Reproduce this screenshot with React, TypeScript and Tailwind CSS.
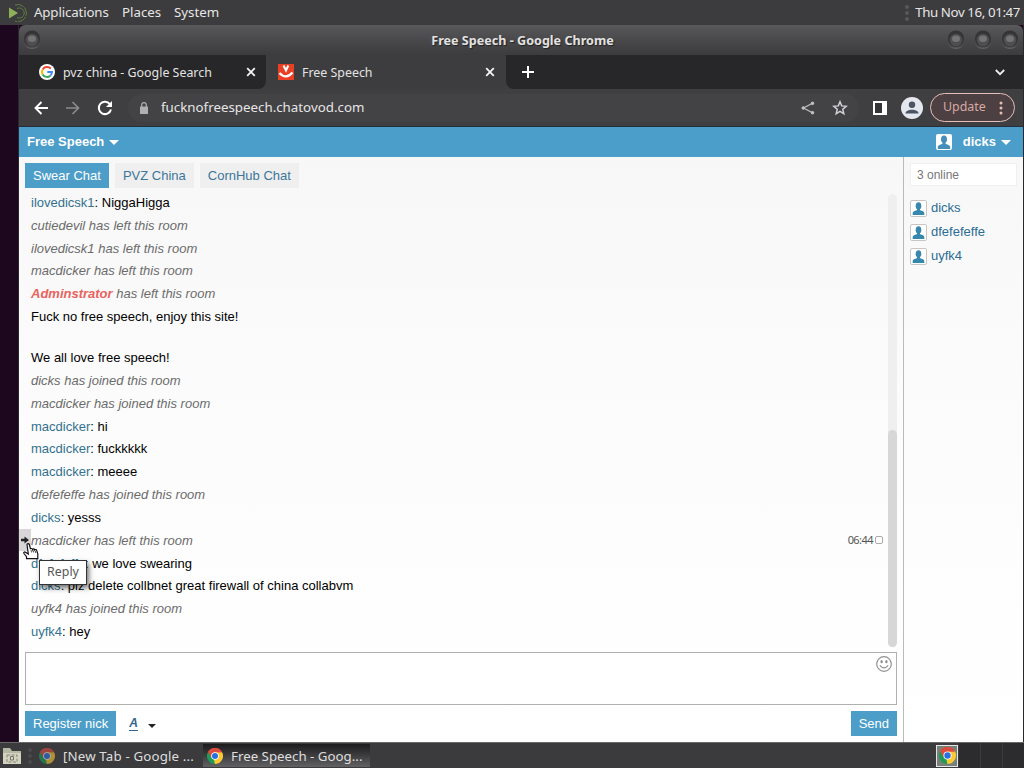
import type { ReactNode } from "react";

type Message = {
  nick?: string;
  text: string;
  system?: boolean;
  admin?: boolean;
  time?: string;
  gapAfter?: boolean;
};

const messages: Message[] = [
  { nick: "ilovedicsk1", text: "NiggaHigga" },
  { nick: "cutiedevil", text: "has left this room", system: true },
  { nick: "ilovedicsk1", text: "has left this room", system: true },
  { nick: "macdicker", text: "has left this room", system: true },
  { nick: "Adminstrator", text: "has left this room", system: true, admin: true },
  { text: "Fuck no free speech, enjoy this site!", gapAfter: true },
  { text: "We all love free speech!" },
  { nick: "dicks", text: "has joined this room", system: true },
  { nick: "macdicker", text: "has joined this room", system: true },
  { nick: "macdicker", text: "hi" },
  { nick: "macdicker", text: "fuckkkkk" },
  { nick: "macdicker", text: "meeee" },
  { nick: "dfefefeffe", text: "has joined this room", system: true },
  { nick: "dicks", text: "yesss" },
  { nick: "macdicker", text: "has left this room", system: true, time: "06:44" },
  { nick: "dfefefeffe", text: "we love swearing" },
  { nick: "dicks", text: "plz delete collbnet great firewall of china collabvm" },
  { nick: "uyfk4", text: "has joined this room", system: true },
  { nick: "uyfk4", text: "hey" },
];

const online = ["dicks", "dfefefeffe", "uyfk4"];

function ChromeLogo({ className }: { className: string }) {
  return (
    <svg viewBox="0 0 16 16" className={className}>
      <path d="M8 8L1.07 4A8 8 0 0 1 14.93 4Z" fill="#dd4b3e" />
      <path d="M8 8L14.93 4A8 8 0 0 1 8 16Z" fill="#fcc934" />
      <path d="M8 8L8 16A8 8 0 0 1 1.07 4Z" fill="#1e9b57" />
      <path d="M8 4.2H15L11.4 10L8 16L7 12Z" fill="#fcc934" />
      <path d="M1.07 4A8 8 0 0 1 15 4.3H8L4.6 10Z" fill="#dd4b3e" />
      <circle cx="8" cy="8" r="3.8" fill="#fff" />
      <circle cx="8" cy="8" r="3" fill="#2a6fe0" />
    </svg>
  );
}

function UserIcon({ className, fill }: { className: string; fill: string }) {
  return (
    <svg viewBox="0 0 16 16" className={className} fill={fill}>
      <ellipse cx="8" cy="5.2" rx="3" ry="3.8" />
      <path d="M6.5 7.5h3v2.2c1 .8 4.5 1 4.7 3.3V15H1.8v-2c.2-2.3 3.7-2.500 4.7-3.3z" />
    </svg>
  );
}

function Caret({ className }: { className: string }) {
  return (
    <svg viewBox="0 0 10 5" className={className} fill="currentColor">
      <path d="M0 0h10L5 5z" />
    </svg>
  );
}

function WindowButton() {
  return (
    <svg viewBox="0 0 18 20" className="h-5 w-[18px]">
      <path d="M1 13a8 7 0 0 0 16 0l-1 3a8 5 0 0 1-14 0z" fill="#626164" />
      <circle cx="9" cy="9.5" r="8" fill="#343335" />
      <circle cx="9" cy="11" r="6.3" fill="#4e4d50" />
      <ellipse cx="9" cy="9.8" rx="4" ry="3.3" fill="#747376" />
    </svg>
  );
}

function Close() {
  return (
    <svg viewBox="0 0 10 10" className="size-[10px]" stroke="#f4f4f4" strokeWidth="1.8">
      <path d="M1.2 1.2l7.6 7.6M8.8 1.2L1.2 8.8" />
    </svg>
  );
}

function TopPanel() {
  return (
    <div className="flex h-[25px] shrink-0 items-center bg-[#3c3b3d] text-[13.3px] text-[#e6e6e6]">
      <svg viewBox="0 0 20 20" className="ml-[8px] size-5" fill="none">
        <path d="M7 2A8.5 8.5 0 1 1 7 18" stroke="#5f8040" strokeDasharray="9 1" />
        <path d="M9 5.5A5 5 0 1 1 9 14.5" stroke="#5f8040" />
        <path d="M1 4.5L10 10L1 15.5Z" fill="#8faf58" />
      </svg>
      <span className="ml-[6px] w-[88px] tracking-[-0.15px]">Applications</span>
      <span className="w-[52px]">Places</span>
      <span>System</span>
      <span className="ml-auto mr-[6px] h-4 border-l-4 border-dotted border-[#58575a]" />
      <span className="mr-[4px] tracking-[-0.4px] whitespace-nowrap">Thu Nov 16, 01:47</span>
    </div>
  );
}

function TitleBar() {
  return (
    <div className="flex h-[30px] shrink-0 items-center rounded-t-md bg-linear-to-b from-[#59585b] via-[#49484b] to-[#3c3b3d] pb-[2px]">
      <div className="flex w-20 pl-[4px]">
        <WindowButton />
      </div>
      <div className="flex-1 pt-[5px] pl-[3px] text-center text-[12.6px] font-bold text-[#e2e2e2] [text-shadow:1px_1px_1px_#222]">
        Free Speech - Google Chrome
      </div>
      <div className="flex w-20 justify-end gap-[9px] pr-[4px]">
        <WindowButton />
        <WindowButton />
        <WindowButton />
      </div>
    </div>
  );
}

function TabStrip() {
  return (
    <div className="flex h-[34px] shrink-0 bg-[#3d3c3f] text-[12.4px] text-[#e3e3e3]">
      <div className="flex w-[247px] items-center rounded-br-lg bg-[#272628] pr-[10px] pl-[20px]">
        <svg viewBox="0 0 16 16" className="size-4" fill="none" strokeWidth="1.9">
          <circle cx="8" cy="8" r="8" fill="#fff" />
          <path d="M11.8 4.7A5 5 0 0 0 3.7 5.4" stroke="#ea4335" />
          <path d="M3.7 5.4A5 5 0 0 0 3.7 10.6" stroke="#fbbc05" />
          <path d="M3.7 10.6A5 5 0 0 0 11.3 11.7" stroke="#34a853" />
          <path d="M11.3 11.7A5 5 0 0 0 13 8H8.3" stroke="#4285f4" />
        </svg>
        <span className="ml-[8px] flex-1 pt-[2px]">pvz china - Google Search</span>
        <Close />
      </div>
      <div className="flex w-[240px] items-center pr-[11px] pl-[12px]">
        <svg viewBox="0 0 16 16" className="size-4" fill="none" stroke="#fff">
          <path d="M0 0h16v16H0z" fill="#e83f25" stroke="none" />
          <path d="M5.500 1.5L8 6.500L10.300 1.5" strokeWidth="2" />
          <path d="M1.5 9Q8 16 14.5 8.500" strokeWidth="2.3" />
        </svg>
        <span className="ml-[8px] flex-1 pt-[2px]">Free Speech</span>
        <Close />
      </div>
      <div className="flex flex-1 items-center justify-between rounded-bl-lg bg-[#272628] pr-[18px] pl-[16px]">
        <svg viewBox="0 0 12 12" className="size-3" stroke="#fff" strokeWidth="2">
          <path d="M6 0v12M0 6h12" />
        </svg>
        <svg viewBox="0 0 10 7" className="h-[7px] w-[10px]" fill="none" stroke="#eee" strokeWidth="1.8">
          <path d="M.8 1L5 5.2L9.2 1" />
        </svg>
      </div>
    </div>
  );
}

function Toolbar() {
  return (
    <div className="flex h-[38px] shrink-0 items-center border-b border-[#242f3b] bg-[#3f3e41] pl-[15px] text-[13px]">
      <svg viewBox="0 0 14 14" className="size-[14px]" fill="none" stroke="#fff" strokeWidth="1.9">
        <path d="M14 7H1.5M7.5 1L1.5 7l6 6" />
      </svg>
      <svg viewBox="0 0 14 14" className="ml-[18px] size-[14px]" fill="none" stroke="#8b8a8d" strokeWidth="1.7">
        <path d="M0 7h12.5M6.5 1l6 6l-6 6" />
      </svg>
      <svg viewBox="0 0 16 16" className="ml-[17px] size-4" fill="none" stroke="#fff" strokeWidth="2">
        <path d="M13.2 4.5A6.2 6.2 0 1 0 14 9.5" />
        <path d="M15 1v6H9z" fill="#fff" stroke="none" />
      </svg>
      <div className="ml-[15px] flex h-7 w-[731px] items-center rounded-full bg-[#434245] pr-[11px] pl-[12px]">
        <svg viewBox="0 0 8 12" className="h-3 w-2" fill="#b0afb2">
          <path d="M0 4.5h8V12H0z" />
          <path d="M1.7 5V3a2.3 2.3 0 0 1 4.6 0v2" fill="none" stroke="#b0afb2" strokeWidth="1.2" />
        </svg>
        <span className="ml-[13px] flex-1 text-[13.3px] tracking-[0.01px] text-[#e6e6e6]">fucknofreespeech.chatovod.com</span>
        <svg viewBox="0 0 14 14" className="size-[14px]" fill="#c2c1c4" stroke="#c2c1c4">
          <path d="M11.5 2.3L2.5 7l9 4.7" fill="none" strokeWidth="1.2" />
          <circle cx="11.5" cy="2.3" r="1.3" />
          <circle cx="2.3" cy="7" r="1.3" />
          <circle cx="11.5" cy="11.7" r="1.3" />
        </svg>
        <svg viewBox="0 0 16 16" className="ml-[17px] size-4" fill="none" stroke="#d2d1d4" strokeWidth="1.5">
          <path d="M8 1.8l1.7 4.1 4.5.4-3.4 3 1 4.3L8 11.3l-3.8 2.3 1-4.3-3.4-3 4.5-.4z" />
        </svg>
      </div>
      <svg viewBox="0 0 14 14" className="ml-[14px] size-[14px]">
        <path d="M0 0h14v14H0z" fill="#fff" />
        <path d="M2 2h7v10H2z" fill="#343336" />
      </svg>
      <svg viewBox="0 0 22 22" className="ml-[14px] size-[22px]">
        <circle cx="11" cy="11" r="11" fill="#e4e8ee" />
        <circle cx="11" cy="7.7" r="3.2" fill="#4b5465" />
        <path d="M4.5 16.5c0-5 13-5 13 0z" fill="#4b5465" />
      </svg>
      <div className="ml-[7px] flex h-[29px] w-[85px] shrink-0 items-center justify-between rounded-full border border-[#e5bfba] bg-[#4c4042] pr-[11px] pl-[12px] text-[#d9a9a3]">
        <span className="text-[12.4px]">Update</span>
        <svg viewBox="0 0 4 14" className="h-[14px] w-1" fill="#eabbb4">
          <circle cx="2" cy="2" r="1.5" />
          <circle cx="2" cy="7" r="1.5" />
          <circle cx="2" cy="12" r="1.5" />
        </svg>
      </div>
    </div>
  );
}

function MessageRow({ message }: { message: Message }) {
  const { nick, text, system, admin, time, gapAfter } = message;
  return (
    <div className={gapAfter ? "h-[41.03px]" : "h-[22.83px]"}>
      <div className="relative flex h-[22.83px] items-center pl-[12px]">
        {time && <ReplyHandle />}
        {system ? (
          <p className="text-[#6b6b6b] italic">
            <span className={admin ? "font-bold text-[#e8635f]" : ""}>{nick}</span> {text}
          </p>
        ) : (
          <p className="text-black">
            {nick && <span className="text-[#33718f]">{nick}</span>}
            {nick && ": "}
            {text}
          </p>
        )}
        {time && (
          <span className="mr-[5px] ml-auto flex items-center gap-[2px] text-[#555]">
            <span className="font-['Noto_Sans',sans-serif] text-[11px] tracking-[-0.55px]">{time}</span>
            <span className="size-2 rounded-xs border border-[#aaa]" />
          </span>
        )}
      </div>
    </div>
  );
}

// reply arrow with the hand pointer and its tooltip
function ReplyHandle() {
  return (
    <>
      <span className="absolute top-0 left-0 flex h-[22px] w-[12px] items-center justify-center bg-[#d8d6d8]">
        <svg viewBox="0 0 8 8" className="size-2" fill="#222">
          <path d="M0 2.7h3.5V.5L8 4L3.5 7.5V5.3H0z" />
        </svg>
      </span>
      <span className="absolute top-[30.5px] left-[20px] z-10 flex h-[25px] w-[48px] items-center justify-center border border-[#333] bg-white font-['Noto_Sans',sans-serif] text-[12.4px] text-[#555] shadow-[2px_3px_5px_rgba(0,0,0,0.55)]">
        Reply
      </span>
      <svg viewBox="0 0 16 17" className="absolute top-[13.5px] left-[4px] z-20 h-[17px] w-4" fill="#fff" stroke="#111" strokeWidth="1.2">
        <path d="M4 1.5C4 .3 6 .3 6.3 1.5l1.2 4.7c.2-1 1.9-1 2.1.3.4-1 2-.7 2.1.5.6-.8 1.900-.4 2.100.7l1 3.5v4.500H3.500v-2L1 10.500c-.7-1 .5-2 1.500-1.200L5.300 11z" />
        <path d="M8 7l.6 2.5M10.2 7.3l.5 2.2M12.3 8l.4 2" strokeWidth=".7" />
      </svg>
    </>
  );
}

function BlueButton({ children }: { children: ReactNode }) {
  return <button className="h-[25px] bg-[#4c9dc8] px-2 text-white">{children}</button>;
}

function ChatPage() {
  return (
    <div className="flex flex-1 flex-col bg-linear-to-b from-[#f7f7f7] via-[#fcfcfc] to-white font-['Liberation_Sans',Arial,sans-serif] text-[13px]">
      <header className="flex h-[30px] shrink-0 items-center bg-[#4b9dca] pr-[12px] pl-[8px] font-bold text-white">
        <span>Free Speech</span>
        <Caret className="mt-px ml-[5px] h-[5px] w-[10px]" />
        <span className="mr-[11px] ml-auto flex size-4 rounded-xs bg-white">
          <UserIcon className="size-4" fill="#438fb9" />
        </span>
        <span>dicks</span>
        <Caret className="mt-px ml-[5px] h-[5px] w-[10px]" />
      </header>
      <div className="flex flex-1">
        <main className="flex w-[884px] flex-col">
          <nav className="flex gap-[6px] pt-[6px] pl-[6px] text-[#3c769a]">
            <span className="flex h-[25px] items-center bg-[#4c9dc8] px-2 text-white">Swear Chat</span>
            <span className="flex h-[25px] items-center bg-[#efefef] px-2">PVZ China</span>
            <span className="flex h-[25px] items-center bg-[#efefef] px-2">CornHub Chat</span>
          </nav>
          <div className="flex h-[461px] pt-[3px]">
            <div className="w-[869px] pt-[0.3px]">
              {messages.map((message, i) => (
                <MessageRow key={i} message={message} />
              ))}
            </div>
            <div className="mt-[3px] flex h-[453px] w-[9px] flex-col justify-end rounded-full bg-[#efefef]">
              <div className="h-[217px] rounded-full bg-[#d7d7d7]" />
            </div>
          </div>
          <div className="mt-[3px] ml-[6px] flex h-[53px] w-[872px] justify-end border border-[#b0b0b0] bg-white pt-[3px] pr-[4px]">
            <svg viewBox="0 0 16 16" className="size-4" fill="none" stroke="#929292" strokeWidth="1.2">
              <circle cx="8" cy="8" r="7.3" />
              <path d="M3.8 9.3q4.2 5 8.4 0" />
              <ellipse cx="5.6" cy="5.7" rx=".6" ry="1" fill="#929292" />
              <ellipse cx="10.4" cy="5.7" rx=".6" ry="1" fill="#929292" />
            </svg>
          </div>
          <div className="mt-[6px] flex items-center pr-[6px] pl-[6px]">
            <BlueButton>Register nick</BlueButton>
            <span className="ml-[13px] border-b border-[#34658c] text-[12px] leading-[13px] font-bold text-[#34658c] italic">A</span>
            <Caret className="mt-[5px] ml-[10px] h-[4px] w-2 text-[#222]" />
            <span className="ml-auto flex">
              <BlueButton>Send</BlueButton>
            </span>
          </div>
        </main>
        <aside className="flex-1 border-l border-[#bababa] pt-[6px] pl-[6px]">
          <div className="mb-[10px] flex h-[23px] w-[107px] items-center border border-[#f0f0f0] bg-white pl-[6px] text-[12px] text-[#777]">3 online</div>
          {online.map((user) => (
            <div key={user} className="flex h-6 items-center gap-[4px] text-[#2b6c94]">
              <span className="mt-px flex size-[17px] items-center justify-center rounded-xs border border-[#c7c5c5] bg-white">
                <UserIcon className="size-[15px]" fill="#3688ac" />
              </span>
              {user}
            </div>
          ))}
        </aside>
      </div>
    </div>
  );
}

function Taskbar() {
  return (
    <div className="flex h-[26px] shrink-0 items-center border-t border-[#69686b] bg-[#3b3a3c] text-[13.3px] text-[#dedede]">
      <svg viewBox="0 0 20 18" className="ml-[2px] h-[18px] w-5">
        <path d="M1 3V1h7l2 3h9v13H1z" fill="#b5b6a4" />
        <path d="M1 6h18v11H1z" fill="#d2d2bf" />
        <path d="M5 8h10v7H5z" fill="none" stroke="#85867a" strokeDasharray="3 1.5" />
        <path d="M8.5 9.5h3v3.5h-3z" fill="none" stroke="#74756a" />
      </svg>
      <span className="ml-[6px] h-4 border-l-4 border-dotted border-[#4a494b]" />
      <div className="flex w-[171px] items-center pl-[7px]">
        <ChromeLogo className="size-4 opacity-60" />
        <span className="ml-[8px] pt-[2px] tracking-[0.15px] whitespace-nowrap">[New Tab - Google ...</span>
      </div>
      <div className="flex h-[23px] w-[167px] items-center bg-linear-to-b from-[#1c1b1d] to-[#626164] pl-[4px]">
        <ChromeLogo className="size-4" />
        <span className="ml-[8px] pt-[2px] whitespace-nowrap">Free Speech - Goog...</span>
      </div>
      <div className="ml-auto flex h-full items-center">
        <span className="flex size-[22px] items-center justify-center border border-[#e5e5e5] bg-[#778079]">
          <ChromeLogo className="size-[17px]" />
        </span>
        <span className="ml-[1px] h-full w-[21px] bg-[#2c2b2d]" />
        <span className="h-full w-[22px] border-l border-[#3c3b3d] bg-[#2c2b2d]" />
        <span className="h-full w-[22px] border-l border-[#3c3b3d] bg-[#2c2b2d]" />
      </div>
    </div>
  );
}

export default function App() {
  return (
    <div className="flex h-[768px] w-[1024px] flex-col overflow-hidden bg-[#1d071f] font-['Noto_Sans',sans-serif]">
      <TopPanel />
      <div className="ml-[18px] flex h-[717px] shrink-0 flex-col border-x border-[#29282a]">
        <TitleBar />
        <TabStrip />
        <Toolbar />
        <ChatPage />
      </div>
      <Taskbar />
    </div>
  );
}
